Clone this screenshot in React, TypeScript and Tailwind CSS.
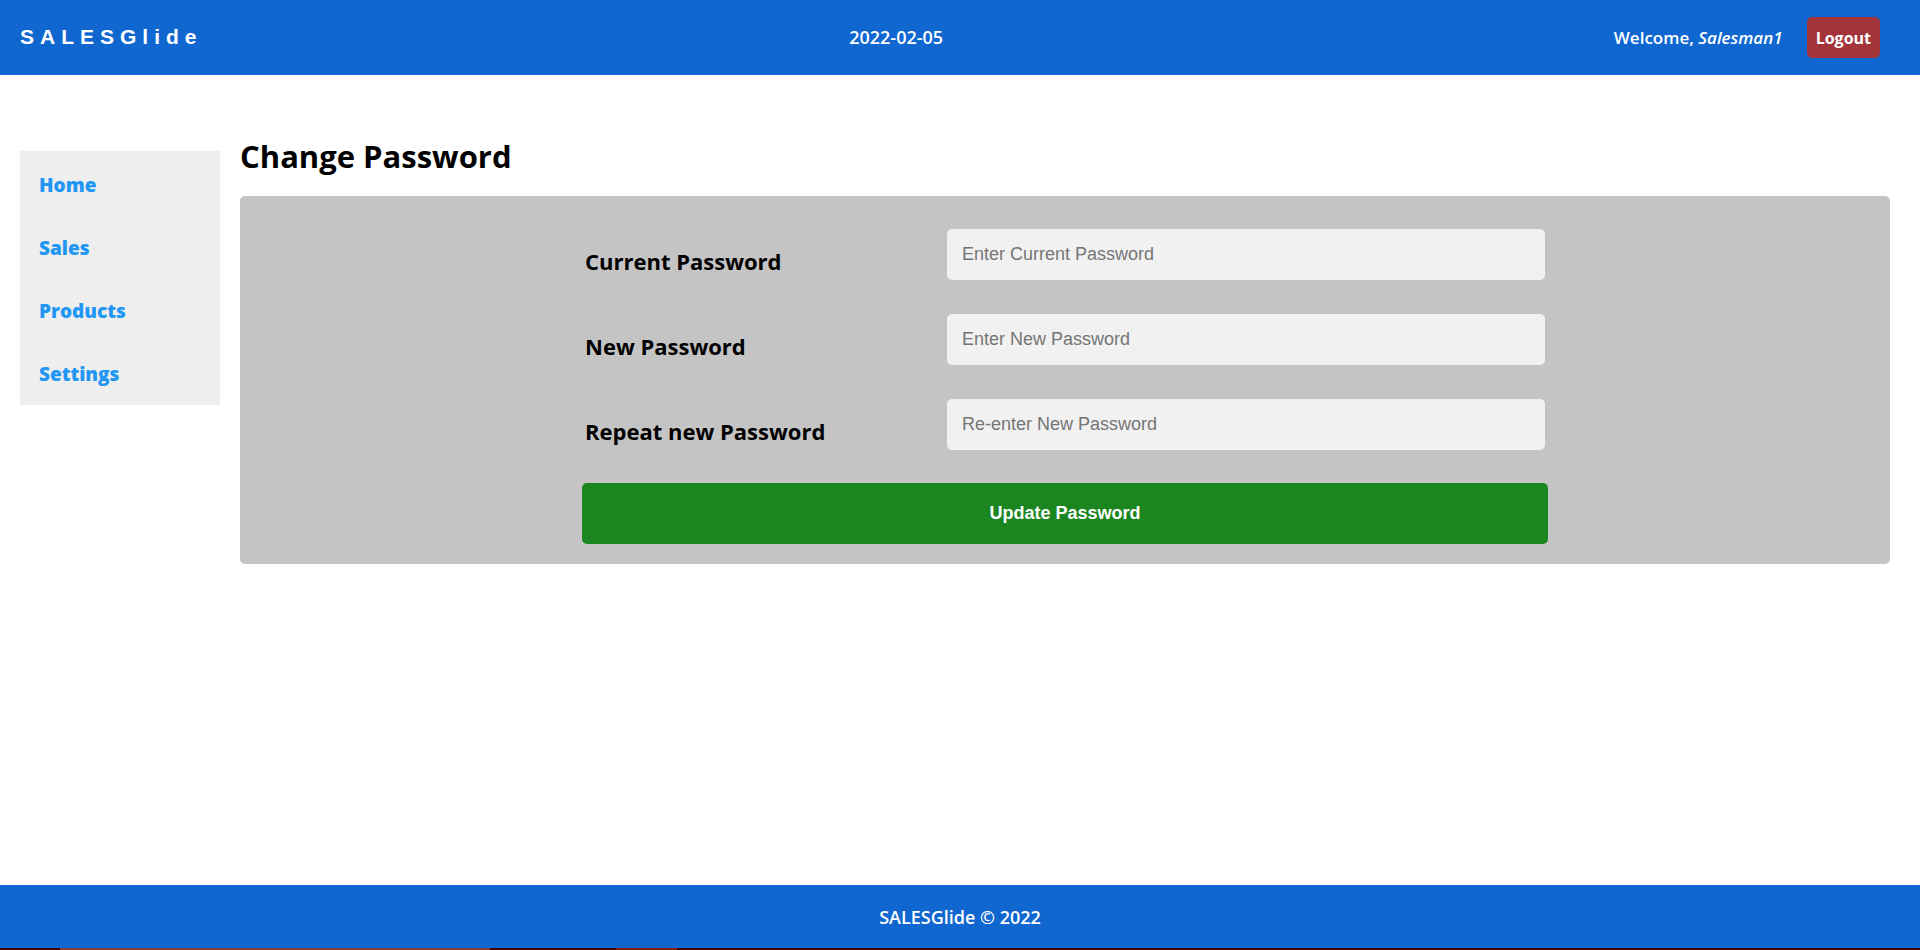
const navItems = ["Home", "Sales", "Products", "Settings"];

const fields = [
  { id: "current", label: "Current Password", placeholder: "Enter Current Password" },
  { id: "new", label: "New Password", placeholder: "Enter New Password" },
  { id: "repeat", label: "Repeat new Password", placeholder: "Re-enter New Password" },
];

export default function App() {
  return (
    <div className="flex min-h-screen flex-col bg-white font-['Open_Sans',sans-serif] text-black">
      <header className="flex h-[75px] items-center justify-between bg-[#0f67cf] pr-10 pl-5 text-white">
        <div className="pb-0.5 font-['Liberation_Sans',sans-serif] text-[21px] font-bold tracking-[6px]">SALESGlide</div>
        <div className="mr-6 pb-0.5 text-lg font-semibold">2022-02-05</div>
        <div className="flex items-center gap-6">
          <div className="text-[17px] font-semibold">
            Welcome, <em>Salesman1</em>
          </div>
          <button type="button" className="h-[41px] rounded-[5px] bg-[#a33439] px-[9px] text-base font-bold">
            Logout
          </button>
        </div>
      </header>

      <div className="flex flex-1 items-start gap-5 pr-[30px] pl-5">
        <nav className="mt-[76px] flex w-[200px] shrink-0 flex-col bg-[#eeeeee] pt-0.5">
          {navItems.map((item) => (
            <a key={item} href="#" className="flex h-[63px] items-center px-[19px] pt-0.5 text-[19px] font-extrabold text-[#2196f3]">
              {item}
            </a>
          ))}
        </nav>

        <main className="min-w-0 flex-1 pt-[60px]">
          <h1 className="text-[31px] leading-[42px] font-bold">Change Password</h1>
          <form className="mt-[19px] flex flex-col items-center rounded-[5px] bg-[#c4c4c4] py-5">
            <div className="flex w-[966px] max-w-full flex-col">
              <div className="flex flex-col gap-[34px] px-[3px] pt-[13px] pb-[33px]">
                {fields.map((field) => (
                  <div key={field.id} className="flex">
                    <label htmlFor={field.id} className="flex-1 pt-4 text-[22px] leading-8 font-bold">
                      {field.label}
                    </label>
                    <input
                      id={field.id}
                      type="password"
                      placeholder={field.placeholder}
                      className="h-[51px] w-[598px] rounded-[5px] bg-[#f1f1f1] px-[15px] font-['Liberation_Sans',sans-serif] text-lg placeholder:text-[#757575]"
                    />
                  </div>
                ))}
              </div>
              <button
                type="submit"
                className="h-[61px] w-full rounded-[5px] bg-[#1b851f] pb-0.5 font-['Liberation_Sans',sans-serif] text-lg font-bold text-white"
              >
                Update Password
              </button>
            </div>
          </form>
        </main>
      </div>

      <footer className="flex h-[63px] items-center justify-center bg-[#0f67cf] text-lg font-semibold text-white">
        SALESGlide © 2022
      </footer>
      <div className="flex h-0.5 bg-[#3c0408]">
        <div className="ml-[60px] w-[430px] bg-[#7d403e]" />
        <div className="ml-[126px] w-[61px] bg-[#851c1c]" />
      </div>
    </div>
  );
}
